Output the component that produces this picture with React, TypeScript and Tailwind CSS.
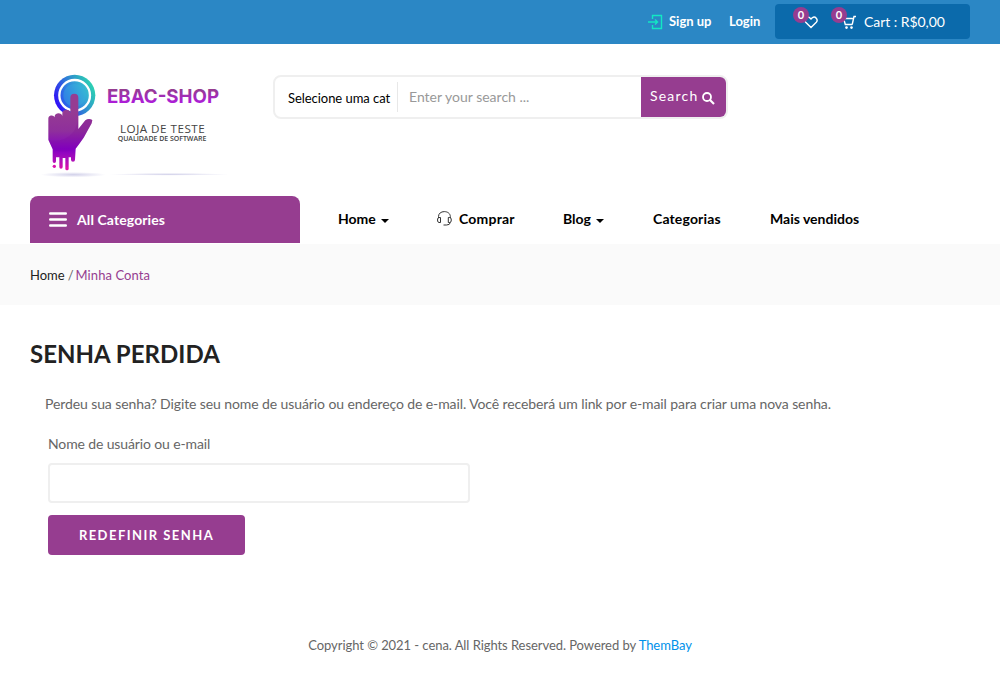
import React from "react";

function Logo() {
  return (
    <svg width="220" height="125" viewBox="0 0 660 375" role="img" aria-label="EBAC-SHOP">
      <defs>
        <linearGradient id="ring" x1="0" y1="0.75" x2="1" y2="0.25">
          <stop offset="0.05" stopColor="#2f0cf8" />
          <stop offset="0.5" stopColor="#2f7fd6" />
          <stop offset="0.95" stopColor="#2cd2b2" />
        </linearGradient>
        <linearGradient id="disc" x1="0" y1="0.75" x2="1" y2="0.25">
          <stop offset="0" stopColor="#2a50ee" />
          <stop offset="1" stopColor="#38c8cc" />
        </linearGradient>
        <linearGradient id="hand" gradientUnits="userSpaceOnUse" x1="0" y1="150" x2="0" y2="330">
          <stop offset="0" stopColor="#963c92" />
          <stop offset="0.35" stopColor="#8f2f9c" />
          <stop offset="0.65" stopColor="#8300c4" />
          <stop offset="0.85" stopColor="#b010b8" />
          <stop offset="1" stopColor="#e010a8" />
        </linearGradient>
        <linearGradient id="word" gradientUnits="userSpaceOnUse" x1="0" y1="88" x2="0" y2="130">
          <stop offset="0" stopColor="#953d90" />
          <stop offset="1" stopColor="#ae1bdc" />
        </linearGradient>
        <radialGradient id="shade">
          <stop offset="0" stopColor="#d2d1ea" />
          <stop offset="1" stopColor="#d2d1ea" stopOpacity="0" />
        </radialGradient>
      </defs>
      <ellipse cx="130" cy="344" rx="98" ry="8" fill="url(#shade)" />
      <ellipse cx="418" cy="343" rx="180" ry="4" fill="url(#shade)" />
      <circle cx="134" cy="106" r="62" fill="url(#ring)" />
      <circle cx="134" cy="106" r="46" fill="url(#disc)" stroke="#fff" strokeWidth="7" />
      <circle cx="134" cy="106" r="34" fill="#38b4e0" fillOpacity="0.35" />
      <path
        d="M121 158V113a12 12 0 0 1 24 0V207L166 181Q176 174 187 180L185 190L161 233Q147 253 137 266L135 299a6 6 0 0 1-12 0V292H116V322a5 5 0 0 1-10 0V294H98V321a5 5 0 0 1-10 0V292H78V304a5 5 0 0 1-10 0V268L55 239V177a10 10 0 0 1 19-5V168a12 12 0 0 1 23 0V162a12 12 0 0 1 24-2Z"
        fill="url(#hand)"
      />
      <path d="M55 240Q102 248 128 218Q145 196 145 159V207L166 181Q176 174 187 180L185 190L161 233L137 266Q102 282 68 268Z" fill="#7a0096" fillOpacity="0.15" />
      <circle cx="73" cy="319" r="5" fill="#d911ae" />
      <circle cx="111" cy="326" r="5" fill="#df10aa" />
      <text x="231" y="129" textLength="336" lengthAdjust="spacingAndGlyphs" className="font-[Inter,sans-serif] text-[58px] font-bold" fill="url(#word)">EBAC-SHOP</text>
      <text x="270" y="219" textLength="254" className="font-['Open_Sans',sans-serif] text-[35px]" fill="#444">LOJA DE TESTE</text>
      <text x="263" y="243" textLength="266" className="font-['Open_Sans',sans-serif] text-[21px] font-semibold" fill="#444">QUALIDADE DE SOFTWARE</text>
    </svg>
  );
}

function Caret() {
  return (
    <svg width="8" height="4" viewBox="0 0 8 4" className="ml-[5px] mt-[3px]">
      <path d="M0 0H8L4 4Z" fill="#000" />
    </svg>
  );
}

function Badge() {
  return (
    <span className="absolute -left-[11px] -top-[8px] flex h-4 w-4 items-center justify-center rounded-full bg-[#963d90] text-[11px] font-bold leading-none text-white">0</span>
  );
}

function TopBar() {
  return (
    <div className="flex h-11 items-start justify-end bg-[#2b87c5] pr-[30px] text-white">
      <div className="flex h-[43px] items-center">
        <svg width="15" height="16" viewBox="0 0 15 16" fill="none" stroke="#12e8c4" strokeWidth="1.4" className="mr-[6px]">
          <path d="M4.5 5V1.5H13.5V14.5H4.5V11M0 8H9.5M7 5.5L9.5 8L7 10.5" />
        </svg>
        <a className="mb-[2px] w-[60px] whitespace-nowrap text-[13px] font-bold">Sign up</a>
        <a className="mb-[2px] w-[46px] whitespace-nowrap text-[13px] font-bold">Login</a>
      </div>
      <div className="mt-1 flex h-[35px] w-[195px] items-center rounded bg-[#0b6aab] pl-[29px]">
        <span className="relative flex">
          <svg width="14" height="14" viewBox="0 0 14 14" fill="none" stroke="#fff" strokeWidth="1.4">
            <path d="M7 12.6L1.7 7.3C-.6 4.6 2.8 .6 5.7 2.8L7 4L8.3 2.8C11.2 .6 14.6 4.6 12.3 7.3Z" />
          </svg>
          <Badge />
        </span>
        <span className="relative ml-[24px] flex">
          <svg width="14" height="14" viewBox="0 0 14 14" fill="none" stroke="#fff" strokeWidth="1.4">
            <path d="M10.2 9.5H3.3L1.6 3.5H10.8M14 1.5H12L10.2 9.5" />
            <circle cx="4.5" cy="12.6" r="1.3" fill="#fff" stroke="none" />
            <circle cx="9.5" cy="12.6" r="1.3" fill="#fff" stroke="none" />
          </svg>
          <Badge />
        </span>
        <span className="ml-[8px] whitespace-nowrap text-[14px] tracking-[-0.05px]">Cart : R$0,00</span>
      </div>
    </div>
  );
}

export default function App() {
  return (
    <div className="h-[692px] w-[1000px] overflow-hidden bg-white font-[Lato,sans-serif] text-[14px] leading-5 text-[#666]">
      <TopBar />
      <header className="flex h-[152px] items-start pl-[30px] pt-4">
        <Logo />
        <form className="ml-[23px] mt-[15px] flex h-[44px] w-[455px] overflow-hidden rounded-[8px] border-2 border-[#efefef]">
          <div className="my-[5px] flex w-[123px] items-center whitespace-nowrap border-r border-[#e8e8e8] pl-[13px] pt-[2px] text-[13px] tracking-[-0.05px] text-black">Selecione uma cat</div>
          <div className="flex flex-1 items-center whitespace-nowrap pl-[11px] text-[14px] text-[#999]">Enter your search ...</div>
          <button type="button" className="flex w-[85px] items-center bg-[#963d90] pb-[2px] pl-[9px] text-[14px] tracking-[1.2px] text-white">
            Search
            <svg width="13" height="13" viewBox="0 0 13 13" fill="none" stroke="#fff" className="ml-[4px] mt-[4px]">
              <circle cx="5" cy="5" r="4" strokeWidth="1.8" />
              <path d="M8 8L12 12" strokeWidth="2.2" />
            </svg>
          </button>
        </form>
      </header>
      <nav className="flex h-12 items-start pl-[30px] text-[14px] font-bold text-black">
        <div className="flex h-[47px] w-[270px] items-center rounded-t-[8px] bg-[#963d90] pl-[19px] text-white">
          <svg width="18" height="15" viewBox="0 0 18 15" stroke="#fff" strokeWidth="2.4" strokeLinecap="round">
            <path d="M1.2 1.5H16.8M1.2 7.5H16.8M1.2 13.5H16.8" />
          </svg>
          <span className="ml-[10px] tracking-[0.1px]">All Categories</span>
        </div>
        <div className="flex h-[46px] items-center whitespace-nowrap pl-[38px]">
          <span className="flex w-[98px] items-center">Home <Caret /></span>
          <span className="flex w-[127px] items-center tracking-[0.2px]">
            <svg width="17" height="16" viewBox="0 0 17 16" fill="none" stroke="#333" strokeWidth="1" className="mr-[6px]">
              <path d="M2.5 7V5.5C2.5 2.5 5 .6 8.3 .6S14.3 2.5 14.3 5.5V7M4.5 6.5V11.5H3Q1.5 11.5 1.5 9T3 6.5ZM12.3 6.5V11.5H13.8Q15.3 11.5 15.3 9T13.8 6.5ZM14.3 11.5Q14 14 10.5 14M7.5 14H10.5" />
            </svg>
            Comprar
          </span>
          <span className="flex w-[90px] items-center">Blog <Caret /></span>
          <span className="w-[117px] tracking-[0.15px]">Categorias</span>
          <span>Mais vendidos</span>
        </div>
      </nav>
      <div className="flex h-[61px] items-center bg-[#fafafa] pl-[30px] text-[13px]">
        <span className="text-[#222]">Home</span>
        <span className="ml-[3px] mr-[2px]">/</span>
        <span className="tracking-[0.08px] text-[#963d90]">Minha Conta</span>
      </div>
      <main className="h-[300px] pl-[30px] pt-[34px]">
        <h1 className="text-[24px] font-bold leading-[30px] tracking-[0.03px] text-[#222]">SENHA PERDIDA</h1>
        <p className="ml-[15px] mt-[25px] whitespace-nowrap tracking-[-0.098px]">Perdeu sua senha? Digite seu nome de usuário ou endereço de e-mail. Você receberá um link por e-mail para criar uma nova senha.</p>
        <form className="ml-[18px] mt-5 flex flex-col items-start">
          <label className="tracking-[-0.13px]">Nome de usuário ou e-mail</label>
          <input aria-label="Nome de usuário ou e-mail" className="mt-[9px] h-10 w-[422px] rounded border-2 border-[#efefef] bg-white" />
          <button type="button" className="mt-3 h-10 w-[197px] rounded bg-[#963d90] text-[13px] font-bold tracking-[1.45px] text-white">REDEFINIR SENHA</button>
        </form>
      </main>
      <footer className="pt-[30px] text-center text-[13px] tracking-[-0.06px]">
        Copyright © 2021 - cena. All Rights Reserved. Powered by <a className="text-[#0091ea]">ThemBay</a>
      </footer>
    </div>
  );
}
